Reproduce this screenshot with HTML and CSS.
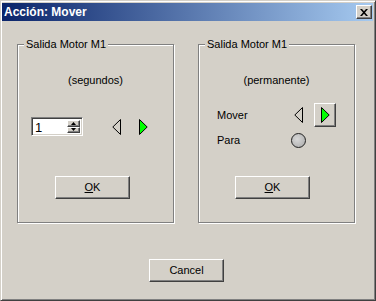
FILE: index.html
```html
<!DOCTYPE html>
<html lang="es">
<head>
    <meta charset="UTF-8">
    <title>Acción: Mover</title>
    <link rel="stylesheet" href="styles.css">
</head>
<body>
    <div class="window">
        <div class="titlebar">
            <span class="title">Acción: Mover</span>
            <button class="close" type="button">
                <svg width="8" height="7" viewBox="0 0 8 7">
                    <path d="M0 0h2l2 2.2L6 0h2L5 3.5 8 7H6L4 4.8 2 7H0l3-3.5z" fill="#000"/>
                </svg>
            </button>
        </div>

        <div class="groups">
            <!-- Motor por segundos -->
            <fieldset class="group">
                <legend>Salida Motor M1</legend>
                <div class="group-body">
                    <div class="caption">(segundos)</div>
                    <div class="timed-row">
                        <div class="spin">
                            <span class="spin-value">1</span>
                            <div class="spin-btns">
                                <span class="spin-btn">
                                    <svg width="5" height="3" viewBox="0 0 5 3"><path d="M2.5 0 5 3H0z" fill="#000"/></svg>
                                </span>
                                <span class="spin-btn">
                                    <svg width="5" height="3" viewBox="0 0 5 3"><path d="M0 0h5L2.5 3z" fill="#000"/></svg>
                                </span>
                            </div>
                        </div>
                        <svg class="arrow-left" width="9" height="16" viewBox="0 0 9 16">
                            <path d="M8.5 0.5 0.8 8l7.7 7.5z" fill="none" stroke="#000"/>
                        </svg>
                        <svg class="arrow-go" width="9" height="16" viewBox="0 0 9 16">
                            <path d="M0.5 0.5 8.2 8l-7.7 7.5z" fill="#00ff00" stroke="#000"/>
                        </svg>
                    </div>
                    <button class="btn btn-ok" type="button"><u>O</u>K</button>
                </div>
            </fieldset>

            <!-- Motor permanente -->
            <fieldset class="group">
                <legend>Salida Motor M1</legend>
                <div class="group-body">
                    <div class="caption">(permanente)</div>
                    <div class="ctrl-row row-move">
                        <span class="ctrl-label label-move">Mover</span>
                        <svg class="arrow-left" width="9" height="16" viewBox="0 0 9 16">
                            <path d="M8.5 0.5 0.8 8l7.7 7.5z" fill="none" stroke="#000"/>
                        </svg>
                        <button class="arrow-btn" type="button">
                            <svg width="9" height="16" viewBox="0 0 9 16">
                                <path d="M0.5 0.5 8.2 8l-7.7 7.5z" fill="#00ff00" stroke="#000"/>
                            </svg>
                        </button>
                    </div>
                    <div class="ctrl-row row-stop">
                        <span class="ctrl-label label-stop">Para</span>
                        <span class="stop-dot"></span>
                    </div>
                    <button class="btn btn-ok btn-ok-right" type="button"><u>O</u>K</button>
                </div>
            </fieldset>
        </div>

        <div class="footer">
            <button class="btn" type="button">Cancel</button>
        </div>
    </div>
</body>
</html>
```

FILE: styles.css
```css
body {
    margin: 0;
    background: #d4d0c8;
    font: 11px/13px "Liberation Sans", Arial, sans-serif;
    color: #000;
}

button {
    font: inherit;
    color: inherit;
}

/* Marco de la ventana clásica */
.window {
    width: 376px;
    height: 301px;
    box-sizing: border-box;
    border: 1px solid;
    border-color: #d4d0c8 #404040 #404040 #d4d0c8;
    box-shadow: inset 1px 1px #fff, inset -1px -1px #808080;
    padding: 2px 2px 2px 1px;
    display: flex;
    flex-direction: column;
}

.titlebar {
    height: 18px;
    flex: none;
    display: flex;
    align-items: center;
    justify-content: space-between;
    padding: 0 1px 0 2px;
    background: linear-gradient(to right, #0a246a, #a6caf0);
    color: #fff;
    font-weight: bold;
    font-size: 12px;
}

.close {
    width: 16px;
    height: 14px;
    padding: 0;
    display: flex;
    align-items: center;
    justify-content: center;
    background: #d4d0c8;
    border: 1px solid;
    border-color: #fff #404040 #404040 #fff;
    box-shadow: inset -1px -1px #808080;
}

/* Grupos */
.groups {
    display: flex;
    gap: 24px;
    margin: 17px 0 0 15px;
}

.group {
    width: 157px;
    height: 185px;
    box-sizing: border-box;
    margin: 0;
    padding: 0;
    min-inline-size: 0;
    border: 1px solid #808080;
    box-shadow: 1px 1px 0 #fff, inset 1px 1px 0 #fff;
}

.group legend {
    margin-left: 6px;
    padding: 0 2px;
    line-height: 13px;
    background: #d4d0c8;
}

.group-body {
    display: flex;
    flex-direction: column;
}

.caption {
    margin-top: 23px;
    text-align: center;
}

.timed-row {
    display: flex;
    align-items: center;
    height: 19px;
    margin: 30px 0 0 13px;
}

.spin {
    width: 52px;
    height: 19px;
    box-sizing: border-box;
    display: flex;
    background: #fff;
    border: 1px solid;
    border-color: #808080 #fff #fff #808080;
    box-shadow: inset 1px 1px #404040, inset -1px -1px #d4d0c8;
    padding: 2px;
}

.spin-value {
    flex: 1;
    font-size: 13px;
    line-height: 15px;
    padding-left: 1px;
}

.spin-btns {
    width: 13px;
    display: flex;
    flex-direction: column;
}

.spin-btn {
    flex: 1;
    display: flex;
    align-items: center;
    justify-content: center;
    background: #d4d0c8;
    border: 1px solid;
    border-color: #fff #404040 #404040 #fff;
    box-shadow: inset -1px -1px #808080;
    box-sizing: border-box;
}

.timed-row .arrow-left {
    margin-left: 29px;
}

.timed-row .arrow-go {
    margin-left: 18px;
}

.btn {
    width: 75px;
    height: 23px;
    padding: 0;
    background: #d4d0c8;
    border: 1px solid;
    border-color: #fff #404040 #404040 #fff;
    box-shadow: inset -1px -1px #808080;
}

.btn-ok {
    margin: 40px 0 0 37px;
}

.btn-ok-right {
    margin: 28px 0 0 36px;
}

/* Controles permanentes */
.ctrl-row {
    display: flex;
    align-items: center;
    padding-left: 18px;
}

.row-move {
    height: 24px;
    margin-top: 16px;
}

.row-stop {
    height: 15px;
    margin-top: 6px;
}

.label-move {
    width: 77px;
}

.label-stop {
    width: 74px;
}

.arrow-btn {
    width: 22px;
    height: 24px;
    margin-left: 11px;
    padding: 0;
    display: flex;
    align-items: center;
    justify-content: center;
    background: #d4d0c8;
    border: 1px solid;
    border-color: #fff #404040 #404040 #fff;
    box-shadow: inset -1px -1px #808080;
}

.stop-dot {
    width: 15px;
    height: 15px;
    box-sizing: border-box;
    border: 1px solid #202020;
    border-radius: 50%;
    background: radial-gradient(circle at 40% 40%, #d8d8d8, #a8a8a8);
}

.footer {
    margin: 36px 0 0 147px;
}
```
